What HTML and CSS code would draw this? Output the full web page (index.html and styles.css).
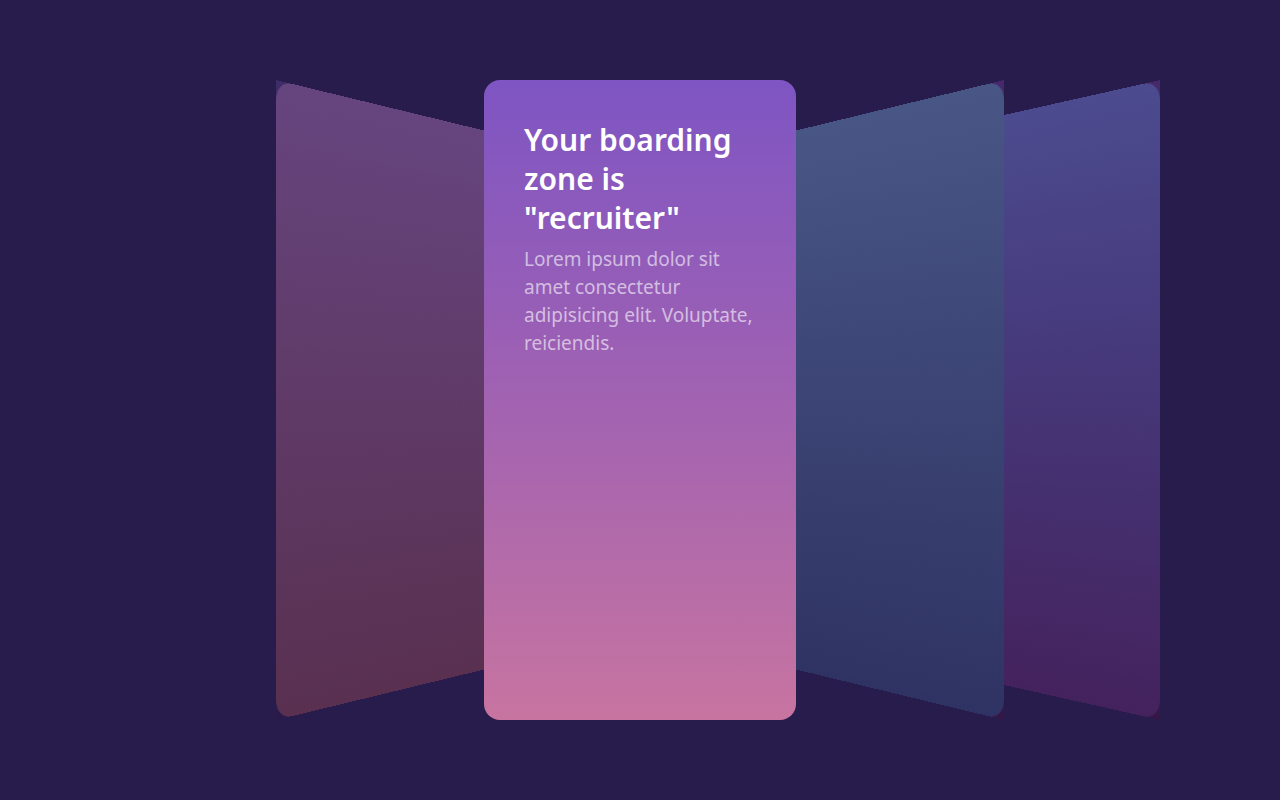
FILE: index.html
```html
<!DOCTYPE html>
<html lang="en">
<head>
  <meta charset="UTF-8">
  <meta name="viewport" content="width=device-width, initial-scale=1.0">
  <title>Boarding zone</title>
  <link rel="stylesheet" href="styles.css">
</head>
<body>
  <main class="carousel">
    <div class="side left"><div class="face rose"></div></div>
    <article class="card">
      <h2>Your boarding zone is "recruiter"</h2>
      <p>Lorem ipsum dolor sit amet consectetur adipisicing elit. Voluptate, reiciendis.</p>
    </article>
    <div class="side right"><div class="face blue"></div></div>
    <div class="side far-right"><div class="face violet"></div></div>
  </main>
</body>
</html>
```
FILE: styles.css
```css
* {
  box-sizing: border-box;
  margin: 0;
}
body {
  min-height: 100vh;
  background: #281c4c;
  font-family: "Noto Sans", "Open Sans", sans-serif;
}
/* the first column is the empty slot on the far left */
.carousel {
  display: grid;
  grid-template-columns: 15fr 20fr 30fr 20fr 15fr;
  min-height: 100vh;
  padding: 80px 120px;
}
.card {
  z-index: 3;
  padding: 40px;
  border-radius: 16px;
  background: linear-gradient(#7e55c3, #9a5fb5 40%, #c774a0);
}
.card h2 {
  margin-bottom: 8px;
  color: #fff;
  font-size: 30px;
  font-weight: 600;
  line-height: 39px;
}
.card p {
  color: rgba(255, 255, 255, 0.6);
  font-size: 19px;
  line-height: 28px;
}
/* side panels, turned away towards the middle card */
.side {
  display: grid;
  background: linear-gradient(#46296a, #351747);
}
.left {
  grid-column: 2;
  width: 152%;
  background: linear-gradient(#3d2c67, #2a1a4c);
  transform-origin: left center;
  transform: perspective(1030px) rotateY(38deg);
}
.right {
  z-index: 2;
  justify-self: end;
  width: 152%;
  transform-origin: right center;
  transform: perspective(1030px) rotateY(-38deg);
}
.far-right {
  z-index: 1;
  justify-self: end;
  width: 140%;
  transform-origin: right center;
  transform: perspective(1000px) rotateY(-35deg);
}
.left .face {
  border-radius: 20px 0 0 20px;
}
.right .face,
.far-right .face {
  border-radius: 0 20px 20px 0;
}
.rose {
  background: linear-gradient(#66457f, #593050);
}
.blue {
  background: linear-gradient(#485686, #2f3363);
}
.violet {
  background: linear-gradient(#4c4b8f, #463a7c 40%, #44225d);
}
```
